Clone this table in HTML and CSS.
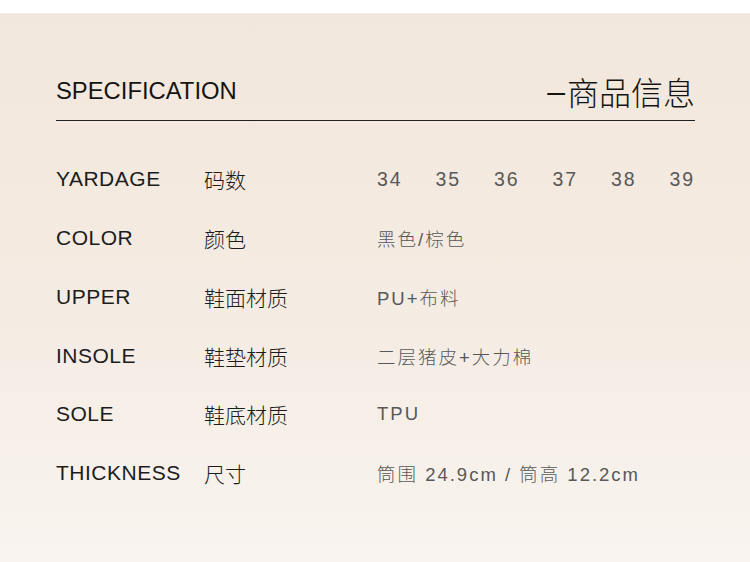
FILE: index.html
```html
<!DOCTYPE html>
<html lang="zh">
<head>
<meta charset="utf-8">
<link rel="stylesheet" href="styles.css">
</head>
<body>
<div class="top-band"></div>
<main class="panel">
  <header class="head">
    <h1 class="title-en">SPECIFICATION</h1>
    <h2 class="title-cn"><span class="dash">–</span>商品信息</h2>
  </header>
  <section class="specs">
    <div class="row">
      <span class="en">YARDAGE</span>
      <span class="cn">码数</span>
      <span class="val sizes"><span>34</span><span>35</span><span>36</span><span>37</span><span>38</span><span>39</span></span>
    </div>
    <div class="row">
      <span class="en">COLOR</span>
      <span class="cn">颜色</span>
      <span class="val">黑色/棕色</span>
    </div>
    <div class="row">
      <span class="en">UPPER</span>
      <span class="cn">鞋面材质</span>
      <span class="val">PU+布料</span>
    </div>
    <div class="row">
      <span class="en">INSOLE</span>
      <span class="cn">鞋垫材质</span>
      <span class="val">二层猪皮+大力棉</span>
    </div>
    <div class="row">
      <span class="en">SOLE</span>
      <span class="cn">鞋底材质</span>
      <span class="val">TPU</span>
    </div>
    <div class="row">
      <span class="en">THICKNESS</span>
      <span class="cn">尺寸</span>
      <span class="val">筒围 24.9cm / 筒高 12.2cm</span>
    </div>
  </section>
</main>
</body>
</html>
```
FILE: styles.css
```css
html, body {
  margin: 0;
  padding: 0;
}
body {
  width: 750px;
  height: 562px;
  overflow: hidden;
  background: #f9f4ef;
  font-family: "Liberation Sans", "Noto Sans CJK SC", sans-serif;
}
.top-band {
  height: 13px;
  background: #ffffff;
}
.panel {
  height: 549px;
  background: linear-gradient(to bottom, #f2e7dc 0%, #f4ebe2 50%, #f9f4ef 100%);
  padding: 0 55px 0 56px;
  box-sizing: border-box;
}
.head {
  height: 108px;
  box-sizing: border-box;
  display: flex;
  justify-content: space-between;
  align-items: flex-start;
  padding-top: 60px;
  border-bottom: 1px solid #222;
}
.title-en {
  margin: 2px 0 0;
  font-family: "Liberation Sans", sans-serif;
  font-weight: 400;
  font-size: 23.8px;
  line-height: 32px;
  color: #141414;
}
.title-cn {
  margin: 2px 0 0;
  font-family: "Noto Sans CJK SC", sans-serif;
  font-weight: 300;
  font-size: 32px;
  line-height: 32px;
  color: #141414;
}
.title-cn .dash {
  font-family: "Liberation Sans", sans-serif;
  font-weight: 400;
  font-size: 32px;
  vertical-align: 3px;
  margin-right: 2px;
}
.specs {
  margin-top: 29px;
  display: grid;
  grid-auto-rows: 58.75px;
}
.row {
  display: grid;
  grid-template-columns: 148px 173px 1fr;
  align-items: center;
}
.en {
  font-size: 21px;
  letter-spacing: 0.5px;
  color: #1c1c1c;
}
.cn {
  font-family: "Noto Sans CJK SC", sans-serif;
  font-weight: 300;
  font-size: 21px;
  color: #1c1c1c;
}
.val {
  font-family: "Liberation Sans", "Noto Sans CJK SC", sans-serif;
  font-weight: 300;
  font-size: 18.5px;
  letter-spacing: 2px;
  color: #585858;
}
.sizes {
  display: flex;
  letter-spacing: 2px;
  font-size: 19.5px;
}
.sizes span {
  width: 58.5px;
  flex: none;
}
.sizes span:last-child {
  width: auto;
}
```
